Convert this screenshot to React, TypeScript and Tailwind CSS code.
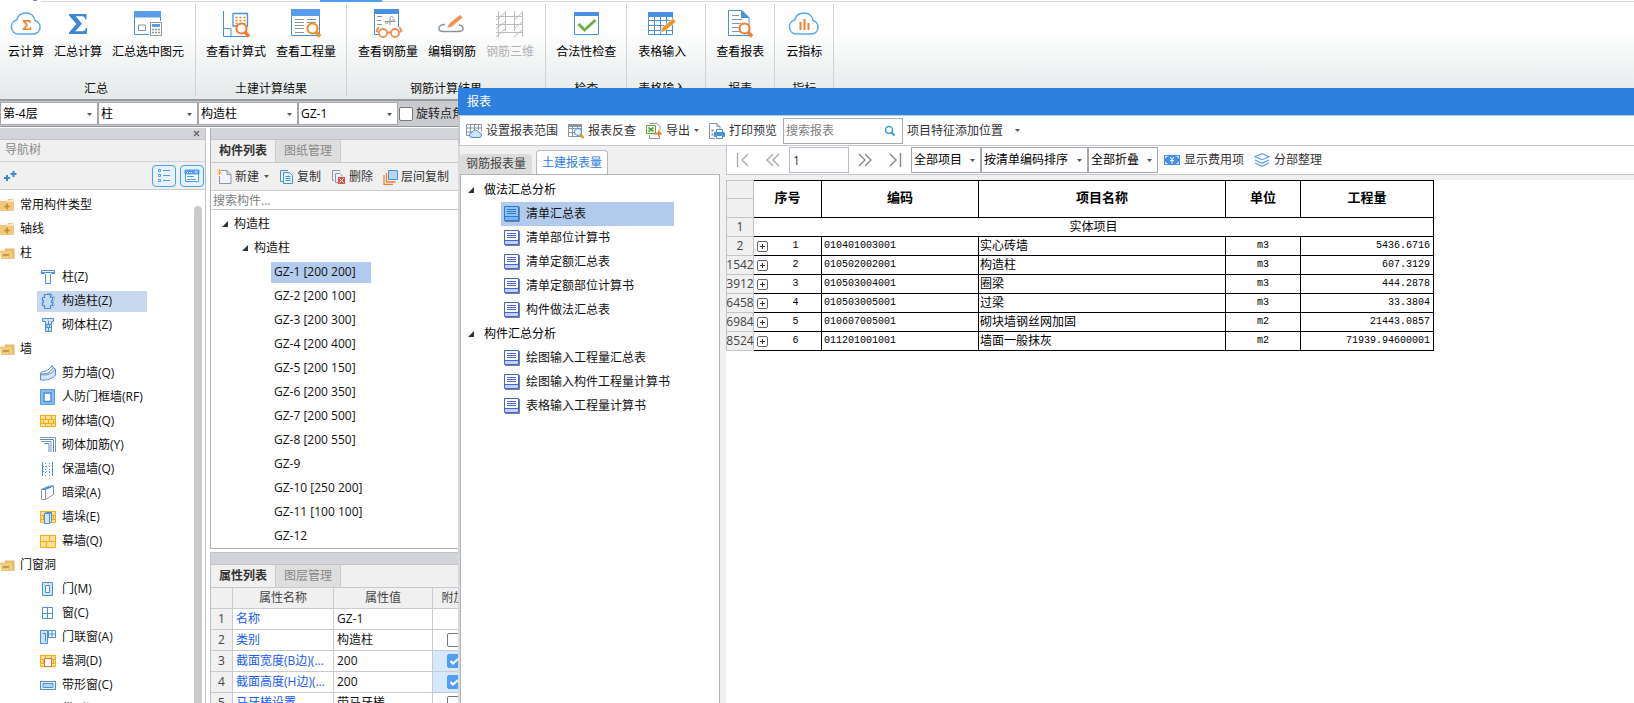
import type { ReactNode } from 'react';

const BLUE = '#4a90d9';
const ORANGE = '#f0802e';
const GRAY = '#8a959e';

const CLOUD = 'M8 27a7.3 7.3 0 0 1-1.2-14.3C8 8 11.5 6 16 6c4.800 0 8.300 3 9 7.500A6.900 6.900 0 0 1 24 27z';

const Magnifier = ({ x, y, color = ORANGE }: { x: number; y: number; color?: string }) => (
  <g stroke={color} fill="#fff">
    <circle cx={x} cy={y} r="5" strokeWidth="2.2" />
    <path d={`M${x + 3.5} ${y + 3.5}l4 4.5`} strokeWidth="3.4" />
  </g>
);

const ribbonIcons: Record<string, ReactNode> = {
  cloudSum: (
    <>
      <path d={CLOUD} stroke="#58a6f2" strokeWidth="1.5" />
      <path d="M12.5 13h8v3h-1l-.5-1.300h-3.500l2.500 3.300-2.800 3.600h4.300l.7-1.600h1v3h-8.700v-1l3.500-4-3.500-4z" fill={ORANGE} />
    </>
  ),
  sum: (
    <path d="M7 7h17.500v5.500h-1.300c-.4-2.300-1.200-3.200-3-3.200h-6.500l6.300 7.400-6.800 7.600h7.300c2 0 2.900-1 3.600-3.300h1.200L24.700 27H7v-1.500l7.400-8.500L7 8.500z" fill="#3f87d6" />
  ),
  sumSelected: (
    <>
      <path d="M2.500 9v18.500H17M28.500 9v5" stroke={BLUE} />
      <path d="M2 4h27v6.500H2z" fill="#5a9bea" />
      <path d="M6.500 18h7v5.500h-7z" stroke={GRAY} />
      <path d="M18.500 15.500h11v13h-11z" stroke={GRAY} fill="#fff" />
      <path d="M20 17h8v3h-8z" fill="#5a9bea" />
      <path d="M20 22.500h8M20 25.500h8" stroke={GRAY} strokeWidth="1.5" strokeDasharray="2 1" />
    </>
  ),
  formula: (
    <>
      <path d="M3.500 4v25.500H29M3.500 21.500h7.500v8" stroke={BLUE} />
      <path d="M13 6.500h14.500v12.500H13z" stroke={BLUE} strokeWidth="1.3" />
      <path d="M15.500 10.500h11M15.500 13.500h11M15.500 16.500h11" stroke={ORANGE} strokeWidth="1.7" strokeDasharray="2 2" />
      <Magnifier x={21.5} y={21.5} />
    </>
  ),
  quantity: (
    <>
      <path d="M1.500 9v19.500h28V9" stroke={BLUE} />
      <path d="M1 2h29v7H1z" fill="#5a9bea" />
      <path d="M5 12.500h9M5 15.500h9M5 18.500h9M5 21.500h9M5 25.500h9M17 12.500h9M17 15.500h9" stroke={GRAY} />
      <Magnifier x={22.5} y={21.5} color="#f0901e" />
    </>
  ),
  rebarView: (
    <>
      <path d="M2.500 6v21.500H7M26.500 6v14" stroke={BLUE} />
      <path d="M2 2h25v5H2z" fill="#4a90e2" />
      <path d="M5 9.500h5M5 13.500h4M5 17.500h5M13 14.500h10M18 18v-7c0-2 3-2 3 0M13 14.500c0 3 3 3 3 0M23 14.500c0-3-3-3-3 0" stroke={GRAY} />
      <g stroke="#f5904f" strokeWidth="1.8">
        <circle cx="11" cy="26" r="4" />
        <circle cx="23" cy="26" r="4" />
        <path d="M15 25.500h4M7 25.500L4.500 24l2-4M27 25.500l2.500-1.500-2-4" />
      </g>
    </>
  ),
  rebarEdit: (
    <>
      <path d="M9 17.500c-4 0-6 2-6 4s1.500 3 4 3h15c3 0 5-1 5-3s-1.500-3-4-3.500" stroke={GRAY} strokeWidth="1.5" />
      <path d="M11 21l3-5L24 8l2.500 2.500L16 19.500z" fill="#f5904f" />
    </>
  ),
  rebar3d: (
    <path d="M4.500 4v26M11.500 4v20M20.500 4v20M28.500 4v26M2 9.500h27M2 17.500h27M2 25.500h27M2 13l9-7M2 22l9-7M2 30l9-8M20 13l9-8M20 22l9-8M20 30l9-8" stroke="#b9bcc0" />
  ),
  check: (
    <>
      <path d="M4.500 5.500h24v22h-24z" stroke={BLUE} />
      <path d="M4 5h25v4H4z" fill="#4a90e2" />
      <path d="M8.500 17l6 6L25.500 13" stroke="#6fb04a" strokeWidth="3" />
    </>
  ),
  tableInput: (
    <>
      <path d="M2.500 5.500h24v22h-24zM2 13.500h25M2 18.500h25M2 23.500h25M8.500 9v18M14.500 9v18M20.500 9v18" stroke={BLUE} />
      <path d="M2 5h25v5H2z" fill="#4a90e2" />
      <path d="M14.500 25.500l1.500-5L27 11.500l3 3L19 24z" fill="#f29423" stroke="#fff" strokeWidth=".6" />
    </>
  ),
  report: (
    <>
      <path d="M4.500 3.500H18l7 7v18H4.500z" stroke={BLUE} fill="#fff" />
      <path d="M17 3l8.500 8H17z" fill={BLUE} />
      <path d="M8 8.500h7M8 12.500h10M8 16.500h9M8 20.500h6M8 24.500h7" stroke={GRAY} />
      <Magnifier x={20.5} y={21.5} />
    </>
  ),
  cloudIndex: (
    <>
      <path d={CLOUD} stroke="#58a6f2" strokeWidth="1.5" />
      <path d="M12.500 15v8M16.500 12v11M20.500 16v7" stroke={ORANGE} strokeWidth="2" />
    </>
  ),
};

const ribbonGroups = [
  {
    label: '汇总',
    pad: 'pl-2 pr-[11px]',
    items: [
      { icon: 'cloudSum', text: '云计算' },
      { icon: 'sum', text: '汇总计算' },
      { icon: 'sumSelected', text: '汇总选中图元' },
    ],
  },
  {
    label: '土建计算结果',
    pad: 'px-2.5',
    items: [
      { icon: 'formula', text: '查看计算式' },
      { icon: 'quantity', text: '查看工程量' },
    ],
  },
  {
    label: '钢筋计算结果',
    pad: 'px-[11px]',
    items: [
      { icon: 'rebarView', text: '查看钢筋量' },
      { icon: 'rebarEdit', text: '编辑钢筋' },
      { icon: 'rebar3d', text: '钢筋三维', disabled: true },
    ],
  },
  { label: '检查', pad: 'px-2.5', items: [{ icon: 'check', text: '合法性检查' }] },
  { label: '表格输入', pad: 'pl-[11px] pr-[19px]', items: [{ icon: 'tableInput', text: '表格输入' }] },
  { label: '报表', pad: 'px-2.5', items: [{ icon: 'report', text: '查看报表' }] },
  { label: '指标', pad: 'px-[11px]', items: [{ icon: 'cloudIndex', text: '云指标' }] },
];

const Ribbon = () => (
  <header className="flex flex-col bg-linear-to-b from-white from-30% to-[#e4e9e9] border-b-2 border-[#969b9f] h-[101px]">
    <div className="flex h-1 items-start">
      <span className="h-px w-1 ml-[33px] bg-[#888]" />
      <span className="mt-px ml-1 h-px w-[279px] bg-[#d9d9d9]" />
      <span className="h-0.5 w-[62px] bg-[#4e9ff0]" />
      <span className="mt-px h-px flex-1 bg-[#d9d9d9]" />
    </div>
    <div className="flex">
      {ribbonGroups.map((group) => (
        <section key={group.label} className={`flex flex-col border-r border-[#d0d2d4] h-[92px] ${group.pad}`}>
          <div className="flex gap-2.5 pt-[3px]">
            {group.items.map((item) => (
              <button
                key={item.text}
                disabled={'disabled' in item}
                className="flex flex-col items-center whitespace-nowrap gap-[5px] text-black disabled:text-[#b0b0b0]"
              >
                <span className="flex justify-center w-0">
                  <svg width="32" height="32" viewBox="0 0 32 32" fill="none" className="shrink-0">
                    {ribbonIcons[item.icon]}
                  </svg>
                </span>
                {item.text}
              </button>
            ))}
          </div>
          <h2 className="mt-[21px] text-center whitespace-nowrap">{group.label}</h2>
        </section>
      ))}
    </div>
  </header>
);

const Arrow = ({ className = '' }: { className?: string }) => (
  <svg width="5" height="3" viewBox="0 0 5 3" className={`shrink-0 ${className}`} aria-hidden="true">
    <path d="M0 0h5L2.500 3z" fill="#555" />
  </svg>
);

interface ComboProps {
  label: string;
  value: string;
  className: string;
}

const Combo = ({ label, value, className }: ComboProps) => (
  <div className={`relative flex shrink-0 ${className}`}>
    <select
      aria-label={label}
      className="appearance-none w-full h-full bg-white border border-[#a5a7aa] pl-0.5 pr-3 text-black"
    >
      <option>{value}</option>
    </select>
    <Arrow className="absolute right-1.5 top-1/2 -mt-px pointer-events-none" />
  </div>
);

const ContextBar = () => (
  <div className="flex items-center h-[26px] bg-[#c9cbd1] border-b border-[#8f9499]">
    <Combo label="楼层" value="第-4层" className="w-[98px] h-[23px]" />
    <Combo label="构件大类" value="柱" className="w-[100px] h-[23px]" />
    <Combo label="构件类型" value="构造柱" className="w-[100px] h-[23px]" />
    <Combo label="构件" value="GZ-1" className="w-[100px] h-[23px]" />
    <label className="flex items-center gap-[3px] ml-px text-[#222]">
      <input type="checkbox" className="appearance-none w-[14px] h-[14px] bg-white border border-[#777] rounded-xs" />
      旋转点角度
    </label>
  </div>
);

const brick = (
  <>
    <path d="M.5 2.500h15v11H.5z" fill="#ffdf9e" stroke="#f5ab18" />
    <path d="M0 6.500h16M0 10.500h16M5.500 2v4M11.500 2v4M3.500 6v4M8.500 6v4M13.500 6v4M5.500 10v4M11.500 10v4" stroke="#f5ab18" />
  </>
);

const navIcons: Record<string, ReactNode> = {
  column: <path d="M1.500 1.500h13v3h-3l-1 1v9h-5v-9l-1-1h-3zM2 3.500h12" stroke={BLUE} />,
  tieColumn: (
    <>
      <path d="M7 .5h5v3h2.500v3l-1 1v3l1 1-2 3" stroke="#8bb7ea" />
      <path d="M4.500 1.500h6v3h2v3h-1v2h1v3h-2v3h-6v-3h-2v-3h1v-2h-1v-3h2z" stroke={BLUE} strokeWidth="1.2" />
    </>
  ),
  masonryColumn: (
    <>
      <path d="M2.500 1.500h11v3h-2v10h-6v-10h-3z" fill="#cfe1f7" stroke={BLUE} />
      <path d="M5 7.500h6M5 10.500h6M8.500 4v3M7 7v3M9.500 7v3M8.500 10v4" stroke={BLUE} />
    </>
  ),
  shearWall: (
    <>
      <path d="M.5 8.500c5 1.500 10-1 12.500-6l2.500 1.500v6c-3 4-8 5.500-15 5z" fill="#d6e5f8" stroke={BLUE} />
      <path d="M.5 8.500L2 6.500c4 0 8-2 10-6l1 2" stroke={BLUE} />
      <path d="M.5 9.500c7 1.500 12-1 15-5.500" stroke={GRAY} />
    </>
  ),
  airDefense: (
    <>
      <path d="M.5.5h14v15H.5z" fill="#8ebbf0" stroke="#5b97de" />
      <path d="M4 4h7v8.500H4z" fill="#fff" stroke={BLUE} strokeWidth="1.5" />
    </>
  ),
  masonryWall: brick,
  masonryBar: (
    <>
      <path d="M0 .5h15.500V15M1 4.500h10V15" stroke={GRAY} />
      <path d="M0 2.500h13.500V15M4 6.500h5V15" stroke={BLUE} />
    </>
  ),
  insulation: (
    <>
      <path d="M2.500 1v14M12.500 1v14" stroke={BLUE} />
      <path d="M5.500 2v13M9.500 2v13M3 5.500h9M3 10.500h9" stroke={BLUE} strokeDasharray="1 2" />
    </>
  ),
  hiddenBeam: (
    <>
      <path d="M1.500 4.500h4v10h-4zM5.500 14.500l8-5v-8" stroke={GRAY} />
      <path d="M1.500 4.500l8-3.500h4l-8 3.500z" fill="#cfe1f7" stroke={BLUE} />
      <path d="M4 3.500h4M7 2.500h4" stroke={BLUE} />
    </>
  ),
  pier: (
    <>
      {brick}
      <path d="M4.500 4.500l2-1h5v9l-2 2h-5zM4.500 4.500h5v10M9.500 4.500l2-1" fill="#d6e5f8" stroke={BLUE} />
    </>
  ),
  curtain: (
    <>
      <path d="M.5 2.500h15v12H.5z" fill="#ffdf9e" stroke="#f5ab18" />
      <path d="M0 8.500h16M9.500 3v5.500M6.500 9v5" stroke="#f5ab18" />
    </>
  ),
  door: (
    <>
      <path d="M2.500 1.500h10v13h-10z" fill="#d6e5f8" stroke={BLUE} />
      <path d="M5.500 4.500h4v7h-4z" fill="#fff" stroke={BLUE} />
    </>
  ),
  window: <path d="M2.500 2.500h10v11h-10zM7.500 3v10M3 8.500h9" stroke={BLUE} />,
  doorWindow: (
    <>
      <path d="M.5 1.500h7v13h-7z" fill="#cfe1f7" stroke={BLUE} />
      <path d="M2.500 4.500h3v8M8.500 1.500h7v7h-7zM12 2v6M9 5h6" stroke={BLUE} />
    </>
  ),
  opening: (
    <>
      {brick}
      <path d="M4.500 5.500h7v8h-7z" fill="#fff" stroke="#e8702a" />
    </>
  ),
  ribbonWindow: (
    <>
      <path d="M.5 4.500h15v8H.5z" fill="#eaf2fc" stroke={BLUE} />
      <path d="M3 6.500h10v4H3z" fill="#b7d3f4" stroke={BLUE} />
    </>
  ),
};

const navTree = [
  { name: '常用构件类型', open: false, children: [] },
  { name: '轴线', open: false, children: [] },
  {
    name: '柱',
    open: true,
    children: [
      ['column', '柱(Z)'],
      ['tieColumn', '构造柱(Z)'],
      ['masonryColumn', '砌体柱(Z)'],
    ],
  },
  {
    name: '墙',
    open: true,
    children: [
      ['shearWall', '剪力墙(Q)'],
      ['airDefense', '人防门框墙(RF)'],
      ['masonryWall', '砌体墙(Q)'],
      ['masonryBar', '砌体加筋(Y)'],
      ['insulation', '保温墙(Q)'],
      ['hiddenBeam', '暗梁(A)'],
      ['pier', '墙垛(E)'],
      ['curtain', '幕墙(Q)'],
    ],
  },
  {
    name: '门窗洞',
    open: true,
    children: [
      ['door', '门(M)'],
      ['window', '窗(C)'],
      ['doorWindow', '门联窗(A)'],
      ['opening', '墙洞(D)'],
      ['ribbonWindow', '带形窗(C)'],
      ['ribbonWindow', '带形洞'],
    ],
  },
];

const Folder = ({ open }: { open: boolean }) => (
  <svg width="15" height="14" viewBox="0 0 15 14" fill="none" className="shrink-0">
    {open ? (
      <>
        <path d="M5 2.500h9.500V13H2z" fill="#e2bb6c" />
        <path d="M0 4.500h11.500L14 13H1z" fill="#f0c97f" />
        <path d="M3 9h6" stroke="#b98a2c" strokeWidth="1.5" />
      </>
    ) : (
      <>
        <path d="M0 3h7l1-2h5l1 2v10H0z" fill="#f0c97f" />
        <path d="M7 3h7" stroke="#fff" />
        <path d="M4 8.500h6M7 5.500v6" stroke="#c39538" strokeWidth="1.7" />
      </>
    )}
  </svg>
);

const NavPanel = () => (
  <nav aria-label="导航树" className="flex flex-col w-[206px] shrink-0 min-h-0 border-r border-[#c0c3c9]">
    <div className="flex items-center justify-end h-3 bg-[#d3d4da] border-b border-[#c0c3c9] pr-[5px]">
      <button aria-label="关闭">
        <svg width="7" height="7" viewBox="0 0 7 7" stroke="#666" strokeWidth="1.4">
          <path d="M1 1l5 5M6 1L1 6" />
        </svg>
      </button>
    </div>
    <h2 className="h-[22px] leading-5 pl-[5px] bg-[#f0f0f0] border-b border-[#d0d2d6] text-[#8a8a8a]">导航树</h2>
    <div className="flex items-center gap-1 h-7 bg-[#f0f0f0] border-b border-[#c8cad0] pl-1 pr-px">
      <button aria-label="添加" className="mr-auto">
        <svg width="13" height="12" viewBox="0 0 13 12" stroke="#3c86d8" strokeWidth="2">
          <path d="M0 8h6M3 5v6M6.500 4h6M9.500 1v6" />
        </svg>
      </button>
      <button aria-label="列表视图" className="flex items-center justify-center w-6 h-[22px] border border-[#4e9ff0] rounded-sm bg-[#e8f2fd]">
        <svg width="14" height="14" viewBox="0 0 14 14" fill="none" stroke="#4e9ff0">
          <path d="M1.500.5h2v2h-2zM1.500 5.500h2v2h-2zM1.500 10.500h2v2h-2zM6 1.500h7M6 6.500h7M6 11.500h7" />
        </svg>
      </button>
      <button aria-label="面板视图" className="flex items-center justify-center w-6 h-[22px] border border-[#4e9ff0] rounded-sm bg-[#e8f2fd]">
        <svg width="16" height="14" viewBox="0 0 16 14" fill="none" stroke="#4e9ff0">
          <path d="M1.500 1.500h13v11h-13z" fill="#fff" />
          <path d="M1 1h14v4H1z" fill="#4e9ff0" />
          <path d="M3 3.500h5" stroke="#fff" strokeDasharray="1 1" />
          <path d="M10 2.500h4L12 4z" fill="#fff" stroke="none" />
          <path d="M3 7.500h7M3 10.500h9" />
        </svg>
      </button>
    </div>
    <div className="flex flex-1 min-h-0">
      <ul className="flex-1 pt-[3px] overflow-hidden">
        {navTree.map((folder) => (
          <li key={folder.name}>
            <button className="flex items-center gap-[5px] h-6">
              <Folder open={folder.open} />
              {folder.name}
            </button>
            <ul>
              {folder.children.map(([icon, name]) => (
                <li key={name} className="flex items-center h-6 pl-[37px]">
                  <button
                    className={`flex items-center gap-1.5 w-[110px] h-[21px] pl-[3px] whitespace-nowrap ${
                      name === '构造柱(Z)' ? 'bg-[#c8d8ef]' : ''
                    }`}
                  >
                    <svg width="16" height="16" viewBox="0 0 16 16" fill="none" className="shrink-0">
                      {navIcons[icon]}
                    </svg>
                    {name}
                  </button>
                </li>
              ))}
            </ul>
          </li>
        ))}
      </ul>
      <div className="w-2 mr-[3px] mt-4 bg-[#cbcbcb] rounded-t-full" />
    </div>
  </nav>
);

const Tabs = ({ names }: { names: string[] }) => (
  <div className="flex h-[23px] bg-[#f0f0f0] border-b border-[#c8cad0]">
    {names.map((name, i) => (
      <button
        key={name}
        className={`w-[65px] border-r border-[#c8cad0] ${i === 0 ? 'font-bold text-[#333]' : 'bg-[#dedede] text-[#888]'}`}
      >
        {name}
      </button>
    ))}
  </div>
);

const Expander = () => (
  <svg width="6" height="6" viewBox="0 0 6 6" className="shrink-0">
    <path d="M6 0v6H0z" fill="#333" />
  </svg>
);

const components = [
  'GZ-1 [200 200]',
  'GZ-2 [200 100]',
  'GZ-3 [200 300]',
  'GZ-4 [200 400]',
  'GZ-5 [200 150]',
  'GZ-6 [200 350]',
  'GZ-7 [200 500]',
  'GZ-8 [200 550]',
  'GZ-9',
  'GZ-10 [250 200]',
  'GZ-11 [100 100]',
  'GZ-12',
];

const listActions = [
  {
    text: '新建',
    menu: true,
    icon: (
      <>
        <path d="M4.500 1.500H10l4 4v9H2.500V7" stroke={GRAY} fill="#f2f4fa" />
        <path d="M10 1.500v4h4" stroke={GRAY} />
        <path d="M0 .5l5 5M5 .5l-5 5M2.500 0v6" stroke="#f0a030" />
      </>
    ),
  },
  {
    text: '复制',
    icon: (
      <>
        <path d="M4 12.500H1.500V1.500H9" stroke={BLUE} />
        <path d="M4.500 3.500h6l3 3v8h-9z" stroke={BLUE} fill="#e8f1fc" />
        <path d="M6.500 7.500h5M6.500 9.500h5M6.500 11.500h5" stroke={BLUE} />
      </>
    ),
  },
  {
    text: '删除',
    icon: (
      <>
        <path d="M3 11.500H1.500V1.500H9M7 13.500H4.500V4.500H9l3 3" stroke={GRAY} />
        <path d="M7 8h7v7H7z" fill="#d9534f" />
        <path d="M8.500 9.500l4 4M12.500 9.500l-4 4" stroke="#fff" />
      </>
    ),
  },
  {
    text: '层间复制',
    icon: (
      <>
        <path d="M1 6v9.500h9M3.500 4v9h9" stroke={ORANGE} strokeWidth="1.3" />
        <path d="M5.500 1.500h9v9h-9z" fill="#b8d4f8" stroke={BLUE} />
      </>
    ),
  },
];

const ComponentPanel = () => (
  <section className="flex flex-col bg-white border-l border-[#b0b2b6]">
    <div className="h-3 bg-[#d3d4da] border-b border-[#c0c3c9]" />
    <Tabs names={['构件列表', '图纸管理']} />
    <div className="flex items-center gap-2.5 h-7 pl-1.5 bg-[#f0f0f0] border-b border-[#c8cad0] text-[#333]">
      {listActions.map((action) => (
        <button key={action.text} className="flex items-center gap-0.5 whitespace-nowrap">
          <svg width="16" height="16" viewBox="0 0 16 16" fill="none" className="shrink-0">
            {action.icon}
          </svg>
          {action.text}
          {action.menu && <Arrow className="ml-[3px]" />}
        </button>
      ))}
    </div>
    <input
      type="search"
      aria-label="搜索构件"
      placeholder="搜索构件..."
      className="h-[19px] pl-0.5 border-b border-[#c8cad0] placeholder:text-[#808080]"
    />
    <div className="pt-0.5 border-b border-[#b0b2b6]">
      <button className="flex items-center gap-1.5 h-6 pl-[11px]"><Expander />构造柱</button>
      <button className="flex items-center gap-1.5 h-6 pl-[31px]"><Expander />构造柱</button>
      <ul>
        {components.map((name, i) => (
          <li key={name} className="flex items-center h-6 pl-[60px]">
            <button className={`w-[100px] h-[21px] pl-[3px] text-left ${i === 0 ? 'bg-[#b2cbec]' : ''}`}>{name}</button>
          </li>
        ))}
      </ul>
    </div>
  </section>
);

const properties = [
  { name: '名称', value: 'GZ-1' },
  { name: '类别', value: '构造柱', checked: false },
  { name: '截面宽度(B边)(mm)', value: '200', checked: true },
  { name: '截面高度(H边)(mm)', value: '200', checked: true },
  { name: '马牙槎设置', value: '带马牙槎', checked: false },
];

const cell = 'border-r border-b border-[#c8cad0] font-normal h-[21px]';

const PropertyPanel = () => (
  <section className="mt-[3px] bg-white border-l border-t border-[#c0c3c9]">
    <div className="h-3 bg-[#d3d4da] border-b border-[#c0c3c9]" />
    <Tabs names={['属性列表', '图层管理']} />
    <table className="table-fixed w-[264px] border-separate border-spacing-0">
      <thead className="bg-[#f0f0f0] text-[#444]">
        <tr>
          <th className={`w-[22px] ${cell}`} aria-label="行号" />
          <th className={`w-[101px] ${cell}`}>属性名称</th>
          <th className={`w-[99px] ${cell}`}>属性值</th>
          <th className={`w-[42px] ${cell}`}>附加</th>
        </tr>
      </thead>
      <tbody>
        {properties.map((row, i) => (
          <tr key={row.name}>
            <th className={`bg-[#f0f0f0] text-[#444] ${cell}`}>{i + 1}</th>
            <td className={`pl-[3px] pr-1 text-[#1a5cf0] truncate ${cell}`}>{row.name}</td>
            <td className={`pl-[3px] ${cell}`}>{row.value}</td>
            <td className={`${cell} ${row.checked ? 'bg-[#d6e9fc]' : ''}`}>
              {row.checked !== undefined && (
                <span className="relative flex justify-center">
                  <input
                    type="checkbox"
                    aria-label={`附加${row.name}`}
                    defaultChecked={row.checked}
                    className="appearance-none w-3.5 h-3.5 bg-white border border-[#777] rounded-xs checked:bg-[#4e9ff5] checked:border-[#4e9ff5]"
                  />
                  {row.checked && (
                    <svg width="14" height="14" viewBox="0 0 14 14" fill="none" className="absolute top-0 pointer-events-none">
                      <path d="M3.500 7l2.500 2.500L11 5" stroke="#fff" strokeWidth="2" />
                    </svg>
                  )}
                </span>
              )}
            </td>
          </tr>
        ))}
      </tbody>
    </table>
  </section>
);

const reportTree = [
  { name: '做法汇总分析', children: ['清单汇总表', '清单部位计算书', '清单定额汇总表', '清单定额部位计算书', '构件做法汇总表'] },
  { name: '构件汇总分析', children: ['绘图输入工程量汇总表', '绘图输入构件工程量计算书', '表格输入工程量计算书'] },
];

const ReportIcon = ({ active }: { active: boolean }) => (
  <svg width="16" height="16" viewBox="0 0 16 16" fill="none" className="shrink-0">
    <path d="M.5.5h14v14H.5z" fill={active ? '#8fc4fa' : '#fff'} stroke={active ? '#2f78d0' : '#4468bb'} />
    <path d="M1 11h13v3H1z" fill={active ? '#78b6f7' : '#c2d0fb'} />
    <path d="M3 3.500h9M3 5.500h9M3 7.500h9M1 10.500h13" stroke={active ? '#2f78d0' : '#4468cc'} />
    <path d="M15.500 1v14.500H1" stroke="#6f7fa8" />
  </svg>
);

const toolbarActions = [
  {
    text: '设置报表范围',
    icon: (
      <>
        <path d="M.5 1.500h15v7M6 12.500H.5v-11M0 5h16M0 9h7M4.500 1v11M8.500 1v6M12.500 1v6" stroke={GRAY} />
        <path d="M6 14.500a2.500 2.500 0 0 1 0-5c1-3 6-3 7 0a2.500 2.500 0 0 1 0 5z" fill="#cfe3fb" stroke={BLUE} />
      </>
    ),
  },
  {
    text: '报表反查',
    icon: (
      <>
        <path d="M.5 1.500h13v12H.5zM0 5.500h14M0 9.500h8M4.500 2v11M9.500 2v3" stroke={GRAY} />
        <path d="M0 1h14v3H0z" fill={GRAY} />
        <circle cx="10" cy="9" r="3.5" fill="#eaf3fe" stroke={BLUE} />
        <path d="M12.500 11.500l3 3.500" stroke="#f0901e" strokeWidth="2.5" />
      </>
    ),
  },
  {
    text: '导出',
    menu: true,
    icon: (
      <>
        <path d="M4 1.500V.5h7l3 3v4M3.500 12v3.500h10V13" stroke={GRAY} />
        <path d="M.5 2.500h9v8h-9z" fill="#fff" stroke="#5fa040" />
        <path d="M2.500 4.500l5 4M7.500 4.500l-5 4" stroke="#5fa040" strokeWidth="1.8" />
        <path d="M8 9.500h4V7l4 3.500-4 3.500v-2.500H8z" fill="#f0802e" />
      </>
    ),
  },
  {
    text: '打印预览',
    icon: (
      <>
        <path d="M6 15.500H.5V.5H8l3 3v3M8 .5v3h3" stroke={GRAY} />
        <path d="M2.500 7.500h2M2.500 11.500h2" stroke={GRAY} strokeWidth="2" />
        <path d="M5.500 9.500h10v4h-10z" fill="#4a90e2" stroke={BLUE} />
        <path d="M7.500 6.500h6v3h-6zM7.500 12.500h6v3h-6z" fill="#fff" stroke={BLUE} />
      </>
    ),
  },
];

const PagerButton = ({ label, d, muted }: { label: string; d: string; muted?: boolean }) => (
  <button aria-label={label} className="flex items-center justify-center w-7 h-5 shrink-0">
    <svg width="14" height="14" viewBox="0 0 14 14" fill="none" stroke={muted ? '#a8a8a8' : '#7b8188'} strokeWidth="1.3">
      <path d={d} />
    </svg>
  </button>
);

const headers = ['编码', '项目名称', '单位', '工程量'];

const bill = [
  { row: '2', code: '010401003001', name: '实心砖墙', unit: 'm3', quantity: '5436.6716' },
  { row: '1542', code: '010502002001', name: '构造柱', unit: 'm3', quantity: '607.3129' },
  { row: '3912', code: '010503004001', name: '圈梁', unit: 'm3', quantity: '444.2878' },
  { row: '6458', code: '010503005001', name: '过梁', unit: 'm3', quantity: '33.3804' },
  { row: '6984', code: '010607005001', name: '砌块墙钢丝网加固', unit: 'm2', quantity: '21443.0857' },
  { row: '8524', code: '011201001001', name: '墙面一般抹灰', unit: 'm2', quantity: '71939.94600001' },
];

const rowHead = 'h-[19px] bg-[#f0f0f0] border-r border-b border-l border-[#c4c4c4] font-normal text-[#444]';
const billCell = 'h-[19px] border-r border-b border-black';
const mono = 'font-["Liberation_Mono","Noto_Sans_CJK_SC",monospace] text-[10px]';

const BillTable = () => (
  <table className="table-fixed w-[708px] border-separate border-spacing-0 leading-4 text-black">
    <thead>
      <tr>
        <th className={`w-7 border-t ${rowHead}`} aria-label="行号" />
        <th rowSpan={2} className={`w-[68px] border-t pb-1 text-[13px] ${billCell}`}>序号</th>
        {headers.map((name, i) => (
          <th key={name} rowSpan={2} className={`border-t pb-1 text-[13px] ${billCell} ${['w-[157px]', 'w-[247px]', 'w-[75px]', 'w-[133px]'][i]}`}>
            {name}
          </th>
        ))}
      </tr>
      <tr>
        <th className={rowHead} aria-label="行号" />
      </tr>
    </thead>
    <tbody>
      <tr>
        <th className={rowHead}>1</th>
        <td colSpan={5} className={`text-center ${billCell}`}>实体项目</td>
      </tr>
      {bill.map((item, i) => (
        <tr key={item.code}>
          <th className={rowHead}>
            <span className="flex justify-center w-[26px]">{item.row}</span>
          </th>
          <td className={billCell}>
            <span className="flex items-center pl-[3px]">
              <button aria-label="展开">
                <svg width="11" height="11" viewBox="0 0 11 11" fill="none" stroke="#333" className="block">
                  <rect x=".5" y=".5" width="10" height="10" rx="1.5" stroke="#666" />
                  <path d="M3 5.500h5M5.500 3v5" />
                </svg>
              </button>
              <span className={`flex-1 pl-0.5 text-center ${mono}`}>{i + 1}</span>
            </span>
          </td>
          <td className={`pl-0.5 ${mono} ${billCell}`}>{item.code}</td>
          <td className={`pl-px ${billCell}`}>{item.name}</td>
          <td className={`text-center ${mono} ${billCell}`}>{item.unit}</td>
          <td className={`pr-[3px] text-right ${mono} ${billCell}`}>{item.quantity}</td>
        </tr>
      ))}
    </tbody>
  </table>
);

const ReportWindow = () => (
  <section
    aria-label="报表"
    className="absolute left-[458px] right-0 top-[88px] bottom-0 flex flex-col bg-[#f0f0f0]"
  >
    <h1 className="h-[27px] shrink-0 pl-[9px] leading-7 bg-[#2d7fe0] text-white">报表</h1>
    <div className="flex items-center gap-0.5 h-[31px] shrink-0 pl-0.5 bg-white border-y border-l-2 border-[#c4c8d0] text-[#333]">
      {toolbarActions.map((action) => (
        <button key={action.text} className="flex items-center gap-1 h-5 px-1 whitespace-nowrap">
          <svg width="16" height="16" viewBox="0 0 16 16" fill="none" className="shrink-0">
            {action.icon}
          </svg>
          {action.text}
          {action.menu && <Arrow />}
        </button>
      ))}
      <label className="flex items-center w-[120px] h-[26px] px-0.5 border border-[#a8abb0] bg-white">
        <input type="search" aria-label="搜索报表" placeholder="搜索报表" className="flex-1 min-w-0 outline-none placeholder:text-[#808080]" />
        <svg width="12" height="12" viewBox="0 0 12 12" fill="none" stroke="#3d9bd8" className="mr-1">
          <circle cx="5" cy="5" r="3.5" strokeWidth="1.5" />
          <path d="M7.500 7.500l3 3" strokeWidth="2" />
        </svg>
      </label>
      <button className="flex items-center gap-3 px-0.5 whitespace-nowrap">
        项目特征添加位置
        <Arrow />
      </button>
    </div>
    <div className="flex flex-1 min-h-0 border-l-2 border-[#d5d8de]">
      <aside className="flex flex-col w-[260px] shrink-0">
        <div className="flex items-end gap-1 h-7 shrink-0">
          <button className="w-[72px] h-5 bg-[#dcdcdc] rounded-t-sm text-[#444]">钢筋报表量</button>
          <button className="w-[72px] h-[25px] -mb-px bg-white border border-b-0 border-[#b5b8bd] rounded-t-sm text-[#2d7fe0]">
            土建报表量
          </button>
        </div>
        <div className="flex-1 bg-white border border-b-0 border-[#b0b3b8] pt-[3px]">
          {reportTree.map((branch) => (
            <div key={branch.name}>
              <button className="flex items-center gap-2.5 h-6 pl-[7px] text-black"><Expander />{branch.name}</button>
              <ul>
                {branch.children.map((name) => (
                  <li key={name} className="pl-10">
                    <button
                      className={`flex items-center gap-1.5 h-6 w-[173px] pl-[3px] whitespace-nowrap ${
                        name === '清单汇总表' ? 'bg-[#b2cbec]' : ''
                      }`}
                    >
                      <ReportIcon active={name === '清单汇总表'} />
                      {name}
                    </button>
                  </li>
                ))}
              </ul>
            </div>
          ))}
        </div>
      </aside>
      <div className="flex flex-col flex-1 min-w-0 ml-1.5">
        <div className="flex items-center gap-0.5 h-[29px] shrink-0 pl-0.5 bg-white border-b border-l border-[#c4c8d0] text-[#333]">
          <PagerButton label="首页" d="M1.500 0v14M12 1L6 7l6 6" muted />
          <PagerButton label="上一页" d="M7 1L1 7l6 6M13 1L7 7l6 6" muted />
          <input aria-label="页码" defaultValue="1" className="w-[60px] h-[26px] pl-[3px] border border-[#b8bbc0] bg-white" />
          <PagerButton label="下一页" d="M1 1l6 6-6 6M7 1l6 6-6 6" />
          <PagerButton label="末页" d="M2 1l6 6-6 6M12.500 0v14" />
          <div className="flex">
            <Combo label="项目范围" value="全部项目" className="w-[70px] h-[26px]" />
            <Combo label="排序方式" value="按清单编码排序" className="w-[107px] h-[26px]" />
            <Combo label="折叠方式" value="全部折叠" className="w-[70px] h-[26px]" />
          </div>
          <button className="flex items-center gap-1 h-5 px-1 whitespace-nowrap">
            <svg width="16" height="10" viewBox="0 0 16 10" fill="none">
              <path d="M0 0h16v10H0z" fill="#4a90e2" />
              <path d="M1.500 3V1.500h2M12.500 1.500h2V3M1.500 7v1.500h2M12.500 8.500h2V7M6 2l2 2.500L10 2M8 4.500V8.500M6 5.500h4" stroke="#fff" />
            </svg>
            显示费用项
          </button>
          <button className="flex items-center gap-1 h-5 px-1 whitespace-nowrap">
            <svg width="16" height="14" viewBox="0 0 16 14" fill="none" stroke="#5a9bea" strokeWidth="1.2">
              <path d="M8 .7l7 3-7 3-7-3zM1 7l7 3.300L15 7M1 10l7 3.300L15 10" />
            </svg>
            分部整理
          </button>
        </div>
        <div className="flex-1 min-h-0 mt-[5px] bg-white overflow-hidden">
          <BillTable />
        </div>
      </div>
    </div>
  </section>
);

const App = () => (
  <div className="relative flex flex-col h-screen overflow-hidden bg-white text-xs leading-4 text-[#111] font-['Open_Sans','Noto_Sans_CJK_SC',sans-serif]">
    <Ribbon />
    <ContextBar />
    <main className="flex flex-1 min-h-0 pt-px">
      <NavPanel />
      <div className="flex flex-col flex-1 min-w-0 ml-1">
        <ComponentPanel />
        <PropertyPanel />
      </div>
    </main>
    <ReportWindow />
  </div>
);

export default App;
